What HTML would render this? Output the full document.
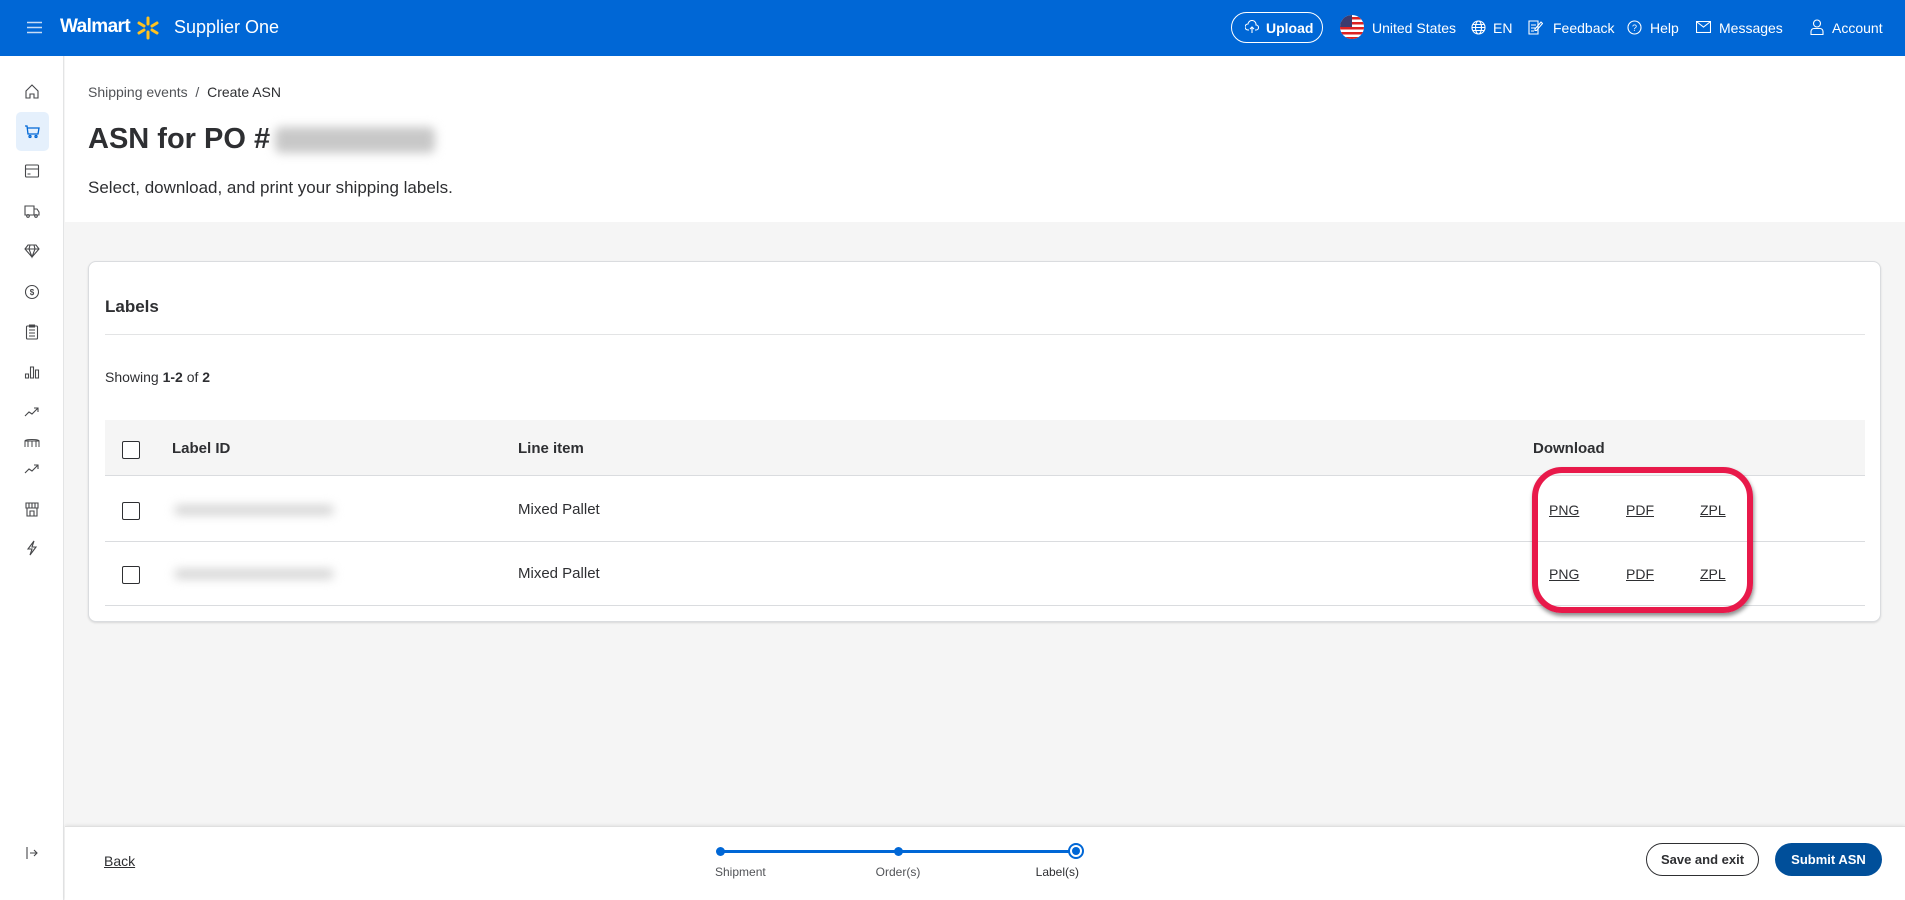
<!DOCTYPE html>
<html><head><meta charset="utf-8">
<style>
*{box-sizing:border-box;margin:0;padding:0}
body{width:1905px;height:900px;overflow:hidden;font-family:"Liberation Sans",sans-serif;color:#2e2f32;background:#f5f5f5;position:relative}
.abs{position:absolute}
.hdr{left:0;top:0;width:1905px;height:56px;background:#0067d6;color:#fff}
.hdr .t{position:absolute;top:20px;font-size:14px;color:#fff}
.side{left:0;top:56px;width:64px;height:844px;background:#fff;border-right:1px solid #e3e4e5}
.top{left:65px;top:56px;width:1840px;height:166px;background:#fff}
.card{left:88px;top:261px;width:1793px;height:361px;background:#fff;border:1px solid #dadcdf;border-radius:8px;box-shadow:0 1px 2px rgba(0,0,0,.12)}
.foot{left:65px;top:826px;width:1840px;height:74px;background:#fff;border-top:1px solid #e0e0e0;box-shadow:0 -1px 3px rgba(0,0,0,.08)}
.cb{position:absolute;width:18px;height:18px;border:1.5px solid #2e2f32;border-radius:2px;background:#fff}
.u{position:absolute;font-size:14px;text-decoration:underline;color:#2e2f32}
.blur{position:absolute;background:#d4d4d4;filter:blur(5px);border-radius:6px}
svg{position:absolute}
</style></head><body>
<div class="abs hdr">
  <svg style="left:27px;top:21px" width="15" height="13" viewBox="0 0 15 13"><path d="M0 1.5h15M0 6.5h15M0 11.5h15" stroke="#c8dcf5" stroke-width="1.6"/></svg>
  <div class="t" style="left:60px;top:16px;font-size:19px;font-weight:bold;letter-spacing:-0.6px">Walmart</div>
  <svg style="left:136px;top:16px" width="24" height="24" viewBox="0 0 24 24"><g stroke="#ffc220" stroke-width="3" stroke-linecap="round"><path d="M12 2v6M12 16v6M3 7l5 3M16 14l5 3M3 17l5-3M16 10l5-3"/></g></svg>
  <div class="t" style="left:174px;top:17px;font-size:18px">Supplier One</div>
  <div class="abs" style="left:1231px;top:12px;width:92px;height:31px;border:1px solid #fff;border-radius:16px"></div>
  <svg style="left:1245px;top:20px" width="14" height="14" viewBox="0 0 14 14"><path d="M4 10H3a3 3 0 0 1 0-6 4 4 0 0 1 8 1 2.5 2.5 0 0 1 0 5h-1M7 13V7M5 9l2-2 2 2" fill="none" stroke="#fff" stroke-width="1.1"/></svg>
  <div class="t" style="left:1266px;font-weight:bold">Upload</div>
  <svg style="left:1340px;top:15px" width="24" height="24" viewBox="0 0 24 24"><defs><clipPath id="c"><circle cx="12" cy="12" r="12"/></clipPath></defs><g clip-path="url(#c)"><rect width="24" height="24" fill="#fff"/><g fill="#d22"><rect y="2" width="24" height="2.5"/><rect y="7" width="24" height="2.5"/><rect y="12" width="24" height="2.5"/><rect y="17" width="24" height="2.5"/><rect y="22" width="24" height="2.5"/></g><rect width="12" height="12" fill="#3c3b6e"/></g></svg>
  <div class="t" style="left:1372px">United States</div>
  <svg style="left:1471px;top:20px" width="15" height="15" viewBox="0 0 15 15"><g fill="none" stroke="#fff" stroke-width="1.1"><circle cx="7.5" cy="7.5" r="6.5"/><ellipse cx="7.5" cy="7.5" rx="3" ry="6.5"/><path d="M1 7.5h13M2 4.5h11M2 10.5h11"/></g></svg>
  <div class="t" style="left:1493px">EN</div>
  <svg style="left:1528px;top:19px" width="15" height="16" viewBox="0 0 15 16"><g fill="none" stroke="#fff" stroke-width="1.1"><path d="M1 2h9v13H1z"/><path d="M3 6h5M3 9h5M3 12h3M7 10l6-7 1.5 1.5-6 7H7z"/></g></svg>
  <div class="t" style="left:1553px">Feedback</div>
  <svg style="left:1627px;top:20px" width="15" height="15" viewBox="0 0 15 15"><circle cx="7.5" cy="7.5" r="6.5" fill="none" stroke="#fff" stroke-width="1.1"/><text x="7.5" y="11" font-size="9" fill="#fff" text-anchor="middle" font-family="Liberation Sans">?</text></svg>
  <div class="t" style="left:1650px">Help</div>
  <svg style="left:1696px;top:21px" width="15" height="12" viewBox="0 0 15 12"><g fill="none" stroke="#fff" stroke-width="1.1"><rect x="0.5" y="0.5" width="14" height="11"/><path d="M1 1l6.5 5 6.5-5"/></g></svg>
  <div class="t" style="left:1719px">Messages</div>
  <svg style="left:1810px;top:19px" width="14" height="16" viewBox="0 0 14 16"><g fill="none" stroke="#fff" stroke-width="1.1"><circle cx="7" cy="4.5" r="3.5"/><path d="M1 15.5v-3a3 3 0 0 1 3-3h6a3 3 0 0 1 3 3v3z"/></g></svg>
  <div class="t" style="left:1832px">Account</div>
</div>

<div class="abs side">
  <div class="abs" style="left:16px;top:56px;width:33px;height:39px;background:#e5f0fc;border-radius:5px"></div>
  <svg style="left:24px;top:27px" width="16" height="16" viewBox="0 0 16 16"><path d="M2 8L8 2l6 6v7h-4v-4H6v4H2z" fill="none" stroke="#46474a" stroke-width="1.1"/></svg>
  <svg style="left:24px;top:67px" width="16" height="16" viewBox="0 0 16 16"><g fill="none" stroke="#0067d6" stroke-width="1.3"><path d="M1 3h2l1 8h10l1-6H3.5"/><circle cx="6" cy="13.5" r="1"/><circle cx="12" cy="13.5" r="1"/></g></svg>
  <svg style="left:24px;top:107px" width="16" height="16" viewBox="0 0 16 16"><g fill="none" stroke="#46474a" stroke-width="1.1"><rect x="1.5" y="2" width="13" height="12" rx="1"/><path d="M1.5 6h13M3.5 11h3"/></g></svg>
  <svg style="left:24px;top:147px" width="16" height="16" viewBox="0 0 16 16"><g fill="none" stroke="#46474a" stroke-width="1.1"><path d="M1 3h9v9H1zM10 6h3l2 3v3h-5"/><circle cx="4" cy="13" r="1.3"/><circle cx="12" cy="13" r="1.3"/></g></svg>
  <svg style="left:24px;top:187px" width="16" height="16" viewBox="0 0 16 16"><g fill="none" stroke="#46474a" stroke-width="1.1"><path d="M4 2h8l3 4-7 8-7-8zM1 6h14M6 2L5 6l3 8 3-8-1-4"/></g></svg>
  <svg style="left:24px;top:228px" width="16" height="16" viewBox="0 0 16 16"><circle cx="8" cy="8" r="6.5" fill="none" stroke="#46474a" stroke-width="1.1"/><text x="8" y="11" font-size="8" text-anchor="middle" fill="#46474a" font-family="Liberation Sans" font-weight="bold">$</text></svg>
  <svg style="left:24px;top:268px" width="16" height="16" viewBox="0 0 16 16"><g fill="none" stroke="#46474a" stroke-width="1.1"><rect x="2.5" y="2" width="11" height="13" rx="1"/><path d="M5.5 1h5v2h-5zM5 6h6M5 9h6M5 12h6"/></g></svg>
  <svg style="left:24px;top:308px" width="16" height="16" viewBox="0 0 16 16"><g fill="none" stroke="#46474a" stroke-width="1.1"><path d="M1.5 10h3v4h-3zM6.5 3h3v11h-3zM11.5 6h3v8h-3z"/></g></svg>
  <svg style="left:24px;top:348px" width="16" height="16" viewBox="0 0 16 16"><path d="M1 12l4-4 3 2 6-6M10 4h4v4" fill="none" stroke="#46474a" stroke-width="1.1"/></svg>
  <svg style="left:24px;top:382px" width="16" height="10" viewBox="0 0 16 10"><path d="M1 9V3h14v6M1 3c0-2 14-2 14 0M4 3v6M8 3v6M12 3v6" fill="none" stroke="#46474a" stroke-width="1"/></svg>
  <svg style="left:24px;top:405px" width="16" height="16" viewBox="0 0 16 16"><path d="M1 12l4-4 3 2 6-6M10 4h4v4" fill="none" stroke="#46474a" stroke-width="1.1"/></svg>
  <svg style="left:24px;top:445px" width="16" height="16" viewBox="0 0 16 16"><g fill="none" stroke="#46474a" stroke-width="1.1"><path d="M2 2h12v5H2zM3 7v8h10V7M6 15v-5h4v5M5 2v5M8 2v5M11 2v5"/></g></svg>
  <svg style="left:24px;top:484px" width="16" height="16" viewBox="0 0 16 16"><path d="M10 1L4 9h4l-2 6 6-8H8z" fill="none" stroke="#46474a" stroke-width="1.1"/></svg>
  <svg style="left:26px;top:790px" width="12" height="14" viewBox="0 0 12 14"><path d="M1 1v12M4 7h7M8 4l3 3-3 3" fill="none" stroke="#46474a" stroke-width="1.1"/></svg>
</div>

<div class="abs top">
  <div class="abs" style="left:23px;top:28px;font-size:14px;color:#515357">Shipping events&nbsp;&nbsp;/&nbsp;&nbsp;<span style="color:#2e2f32">Create ASN</span></div>
  <div class="abs" style="left:23px;top:67px;font-size:29px;font-weight:bold;color:#2e2f32">ASN for PO #</div>
  <div class="blur" style="left:210px;top:71px;width:160px;height:26px;background:#c8c8c8"></div>
  <div class="abs" style="left:23px;top:122px;font-size:17px;color:#2e2f32">Select, download, and print your shipping labels.</div>
</div>

<div class="abs card">
  <div class="abs" style="left:16px;top:35px;font-size:17px;font-weight:bold">Labels</div>
  <div class="abs" style="left:16px;top:72px;width:1760px;height:1px;background:#e3e4e5"></div>
  <div class="abs" style="left:16px;top:107px;font-size:14px">Showing <b>1-2</b> of <b>2</b></div>
  <div class="abs" style="left:16px;top:158px;width:1760px;height:56px;background:#f5f5f5;border-bottom:1px solid #dadcdf"></div>
  <div class="cb" style="left:33px;top:179px"></div>
  <div class="abs" style="left:83px;top:178px;font-size:15px;font-weight:bold">Label ID</div>
  <div class="abs" style="left:429px;top:178px;font-size:15px;font-weight:bold">Line item</div>
  <div class="abs" style="left:1444px;top:178px;font-size:15px;font-weight:bold">Download</div>
  <div class="abs" style="left:16px;top:279px;width:1760px;height:1px;background:#dadcdf"></div>
  <div class="abs" style="left:16px;top:343px;width:1760px;height:1px;background:#dadcdf"></div>
  <div class="cb" style="left:33px;top:240px"></div>
  <div class="cb" style="left:33px;top:304px"></div>
  <div class="blur" style="left:85px;top:243px;width:160px;height:10px"></div>
  <div class="blur" style="left:85px;top:307px;width:160px;height:10px"></div>
  <div class="abs" style="left:429px;top:239px;font-size:15px">Mixed Pallet</div>
  <div class="abs" style="left:429px;top:303px;font-size:15px">Mixed Pallet</div>
  <div class="u" style="left:1460px;top:240px">PNG</div><div class="u" style="left:1537px;top:240px">PDF</div><div class="u" style="left:1611px;top:240px">ZPL</div>
  <div class="u" style="left:1460px;top:304px">PNG</div><div class="u" style="left:1537px;top:304px">PDF</div><div class="u" style="left:1611px;top:304px">ZPL</div>
  <div class="abs" style="left:1443px;top:205px;width:221px;height:146px;border:6px solid #e8194a;border-radius:30px;box-shadow:1px 3px 4px rgba(0,0,0,.45)"></div>
</div>

<div class="abs foot">
  <div class="u" style="left:39px;top:26px">Back</div>
  <div class="abs" style="left:655px;top:23px;width:356px;height:3px;background:#0067d6"></div>
  <div class="abs" style="left:651px;top:20px;width:9px;height:9px;border-radius:50%;background:#0067d6"></div>
  <div class="abs" style="left:829px;top:20px;width:9px;height:9px;border-radius:50%;background:#0067d6"></div>
  <div class="abs" style="left:1003px;top:16px;width:16px;height:16px;border-radius:50%;border:2px solid #0067d6;background:#fff"></div>
  <div class="abs" style="left:1007px;top:20px;width:8px;height:8px;border-radius:50%;background:#0067d6"></div>
  <div class="abs" style="left:650px;top:38px;font-size:12px;color:#515357">Shipment</div>
  <div class="abs" style="left:783px;top:38px;width:100px;text-align:center;font-size:12px;color:#515357">Order(s)</div>
  <div class="abs" style="left:914px;top:38px;width:100px;text-align:right;font-size:12px;color:#2e2f32">Label(s)</div>
  <div class="abs" style="left:1581px;top:16px;width:113px;height:33px;border:1px solid #2e2f32;border-radius:17px;font-size:13px;font-weight:bold;text-align:center;line-height:31px">Save and exit</div>
  <div class="abs" style="left:1710px;top:16px;width:107px;height:33px;background:#004f9a;border-radius:17px;color:#fff;font-size:13px;font-weight:bold;text-align:center;line-height:33px">Submit ASN</div>
</div>
</body></html>
